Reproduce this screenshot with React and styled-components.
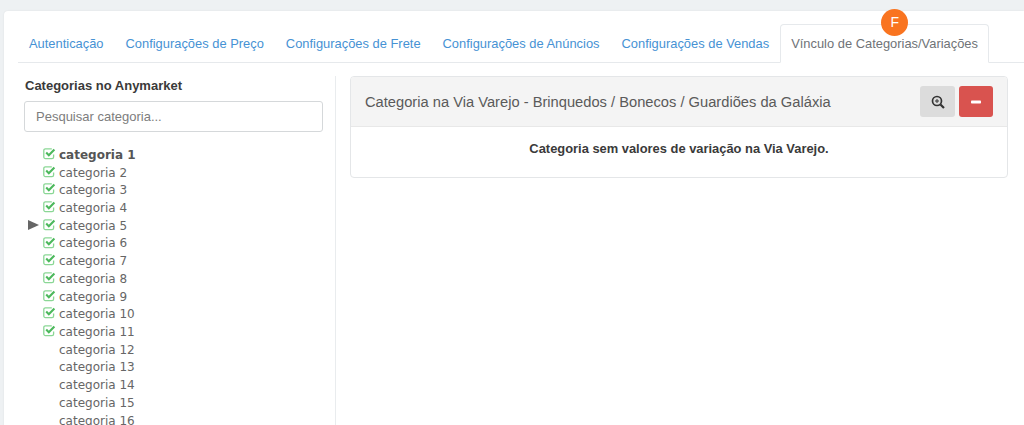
import React from "react";
import styled, { createGlobalStyle } from "styled-components";

const Global = createGlobalStyle`
  html, body { margin: 0; padding: 0; height: 425px; overflow: hidden; background: #eef1f3; }
  body { font-family: "Liberation Sans", Arial, sans-serif; color: #333; }
  * { box-sizing: border-box; }
`;

const Page = styled.div`
  padding: 11px 0 0 4px;
  height: 425px;
  overflow: hidden;
`;

const Card = styled.div`
  background: #fff;
  border-radius: 4px 0 0 0;
  box-shadow: 0 0 2px rgba(0, 0, 0, 0.08);
  height: 440px;
  padding: 13px 0 0 14px;
`;

const Tabs = styled.ul`
  display: flex;
  list-style: none;
  margin: 0;
  padding: 0;
  height: 39px;
  border-bottom: 1px solid #e6e9ec;
`;

const Tab = styled.li`
  position: relative;
  height: 39px;
  padding: 0 10px;
  line-height: 37px;
  font-size: 12.9px;
  white-space: nowrap;
  color: ${(p) => (p.$active ? "#6f7377" : "#4692d4")};
  background: ${(p) => (p.$active ? "#fff" : "transparent")};
  border: 1px solid ${(p) => (p.$active ? "#e6e9ec" : "transparent")};
  border-bottom-color: ${(p) => (p.$active ? "#fff" : "transparent")};
  border-radius: 4px 4px 0 0;
`;

const Badge = styled.span`
  position: absolute;
  left: 100px;
  top: -16px;
  width: 27px;
  height: 27px;
  border-radius: 50%;
  background: #f97420;
  color: #fff;
  font-size: 14px;
  line-height: 27px;
  text-align: center;
`;

const Content = styled.div`
  display: flex;
  padding-top: 13px;
`;

const Sidebar = styled.aside`
  width: 318px;
  flex: none;
  height: 360px;
  padding: 0 12px 0 6px;
  border-right: 1px solid #e9ecee;
`;

const SideTitle = styled.h4`
  margin: 1px 0 7px 1px;
  font-size: 13px;
  font-weight: 700;
  line-height: 17px;
  color: #3a3a3a;
`;

const Search = styled.input`
  display: block;
  width: 299px;
  height: 31px;
  padding: 0 11px;
  border: 1px solid #d5d8da;
  border-radius: 3px;
  font: 13px "Liberation Sans", Arial, sans-serif;
  &::placeholder { color: #7d7d7d; opacity: 1; }
`;

const Tree = styled.ul`
  list-style: none;
  margin: 14px 0 0;
  padding: 0;
`;

const Row = styled.li`
  position: relative;
  display: flex;
  align-items: center;
  height: 17.73px;
  padding-left: 19px;
  font-family: "DejaVu Sans", Verdana, sans-serif;
  font-size: 12px;
  font-weight: ${(p) => (p.$bold ? 700 : 400)};
  color: ${(p) => (p.$bold ? "#555" : "#666")};
  white-space: nowrap;
`;

const CheckBox = styled.svg`
  position: absolute;
  left: 19px;
  top: 1px;
  width: 13px;
  height: 13px;
`;

const Label = styled.span`
  margin-left: 16px;
`;

const Arrow = styled.span`
  position: absolute;
  left: 4px;
  top: 3px;
  width: 0;
  height: 0;
  border-left: 11px solid #666;
  border-top: 5.5px solid transparent;
  border-bottom: 5.5px solid transparent;
`;

const Main = styled.section`
  flex: 1;
  min-width: 0;
  padding: 0 17px 0 14px;
`;

const Panel = styled.div`
  border: 1px solid #e4e6e8;
  border-radius: 4px;
  width: 658px;
  background: #fff;
`;

const PanelHead = styled.div`
  display: flex;
  align-items: center;
  height: 50px;
  padding: 0 14px 0 14px;
  background: #f4f4f4;
  border-bottom: 1px solid #e8e8e8;
  border-radius: 3px 3px 0 0;
`;

const PanelTitle = styled.div`
  flex: 1;
  font-size: 14.7px;
  color: #5a5a5a;
  white-space: nowrap;
`;

const Btn = styled.button`
  display: flex;
  align-items: center;
  justify-content: center;
  height: 31px;
  width: ${(p) => p.$w}px;
  margin-left: ${(p) => p.$ml || 0}px;
  padding: 0;
  border: 0;
  border-radius: 3px;
  background: ${(p) => (p.$danger ? "#d9534f" : "#dcdcdc")};
`;

const PanelBody = styled.div`
  height: 50px;
  padding-top: 15px;
  text-align: center;
  font-size: 12.9px;
  font-weight: 700;
  line-height: 14px;
  color: #3a3a3a;
`;

const Check = () => (
  <CheckBox viewBox="0 0 13 13" fill="none">
    <path d="M10.6 7.4V10a1.6 1.6 0 0 1-1.6 1.6H2.4A1.6 1.6 0 0 1 .8 10V3.4a1.6 1.6 0 0 1 1.6-1.6H8.8" stroke="#8ad795" strokeWidth="1.3" />
    <path d="M3.2 5.6l2.6 2.6L11.4 2.4" stroke="#4cb85c" strokeWidth="2.1" />
  </CheckBox>
);

const tabs = ["Autenticação", "Configurações de Preço", "Configurações de Frete", "Configurações de Anúncios", "Configurações de Vendas"];
const cats = Array.from({ length: 16 }, (_, i) => i + 1);

export default function App() {
  return (
    <Page>
      <Global />
      <Card>
        <Tabs>
          {tabs.map((t) => <Tab key={t}>{t}</Tab>)}
          <Tab $active>
            Vínculo de Categorias/Variações
            <Badge>F</Badge>
          </Tab>
        </Tabs>
        <Content>
          <Sidebar>
            <SideTitle>Categorias no Anymarket</SideTitle>
            <Search placeholder="Pesquisar categoria..." />
            <Tree>
              {cats.map((n) => (
                <Row key={n} $bold={n === 1}>
                  {n === 5 && <Arrow />}
                  {n <= 11 && <Check />}
                  <Label>categoria {n}</Label>
                </Row>
              ))}
            </Tree>
          </Sidebar>
          <Main>
            <Panel>
              <PanelHead>
                <PanelTitle>Categoria na Via Varejo - Brinquedos / Bonecos / Guardiões da Galáxia</PanelTitle>
                <Btn $w={35} aria-label="Ampliar">
                  <svg width="14" height="14" viewBox="0 0 14 14" fill="none">
                    <circle cx="6" cy="6" r="4.5" stroke="#333" strokeWidth="1.7" />
                    <path d="M9.5 9.5L13 13" stroke="#333" strokeWidth="2.2" />
                    <path d="M6 4v4M4 6h4" stroke="#333" strokeWidth="1" />
                  </svg>
                </Btn>
                <Btn $w={34} $ml={4} $danger aria-label="Remover">
                  <svg width="10" height="4" viewBox="0 0 10 4"><rect width="10" height="3" y="0.5" rx="0.8" fill="#fff" /></svg>
                </Btn>
              </PanelHead>
              <PanelBody>Categoria sem valores de variação na Via Varejo.</PanelBody>
            </Panel>
          </Main>
        </Content>
      </Card>
    </Page>
  );
}
